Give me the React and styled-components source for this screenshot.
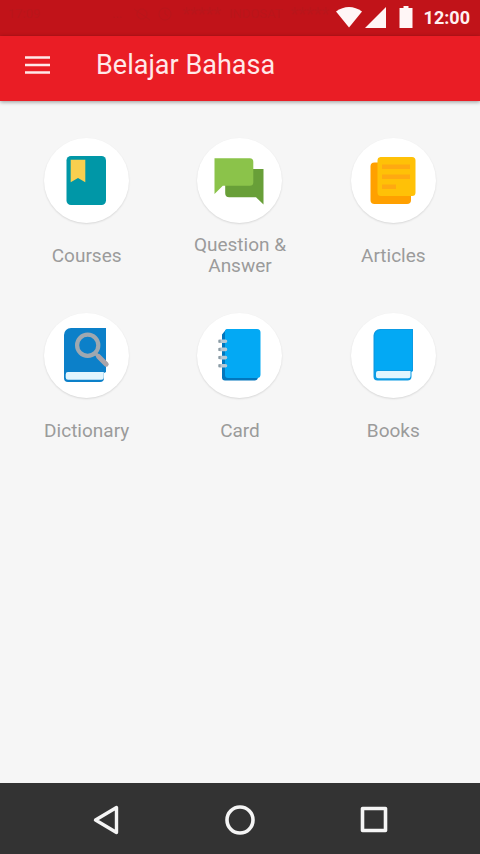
import React from "react";
import styled, { createGlobalStyle } from "styled-components";

const red = "#ea1d25";
const darkRed = "#c11319";
const background = "#f6f6f6";
const labelGrey = "#9b9b9b";
const navGrey = "#333333";

const GlobalStyle = createGlobalStyle`
  * {
    box-sizing: border-box;
  }
  body {
    margin: 0;
    font-family: Roboto, "Noto Sans", sans-serif;
    background: ${background};
  }
`;

const Screen = styled.div`
  min-height: 100vh;
  display: flex;
  flex-direction: column;
`;

const StatusBar = styled.div`
  height: 36px;
  padding: 0 10px 0 8px;
  display: flex;
  align-items: center;
  justify-content: space-between;
  background: ${darkRed};
  color: #fff1f1;
`;

const Carrier = styled.div`
  display: flex;
  align-items: center;
  gap: 8px;
  padding-bottom: 8px;
  font-size: 13px;
  line-height: 16px;
  color: #b9161b;
`;

const CarrierTime = styled.span`
  width: 96px;
`;

const Signal = styled.span`
  font-size: 18px;
`;

const StatusIcons = styled.div`
  display: flex;
  align-items: center;
`;

const Clock = styled.span`
  margin-left: 10px;
  font-size: 18px;
  line-height: 24px;
  font-weight: 700;
`;

const AppBar = styled.header`
  height: 65px;
  padding: 0 24px 8px;
  display: flex;
  align-items: center;
  gap: 46px;
  background: ${red};
  box-shadow: 0 1px 4px rgba(0, 0, 0, 0.4);
`;

const MenuButton = styled.button`
  display: flex;
  padding: 0;
  border: none;
  background: none;
  cursor: pointer;
`;

const Title = styled.h1`
  margin: 0;
  font-size: 27px;
  line-height: 32px;
  font-weight: 400;
  color: #ffe9e9;
`;

const Menu = styled.main`
  flex: 1;
  padding: 37px 10px;
  display: grid;
  grid-template-columns: repeat(3, 1fr);
  align-content: start;
  row-gap: 37px;
`;

const MenuItem = styled.a`
  display: flex;
  flex-direction: column;
  align-items: center;
  gap: 11px;
  text-decoration: none;
`;

const IconCircle = styled.span`
  display: flex;
  width: 85px;
  height: 85px;
  border-radius: 50%;
  background: #ffffff;
  box-shadow: 0 1px 2px rgba(0, 0, 0, 0.12);
`;

const Label = styled.span`
  display: flex;
  align-items: center;
  max-width: 110px;
  height: 42px;
  font-size: 19px;
  line-height: 21px;
  text-align: center;
  color: ${labelGrey};
`;

const NavBar = styled.nav`
  height: 71px;
  padding: 2px 39px 0;
  display: grid;
  grid-template-columns: repeat(3, 1fr);
  align-items: center;
  justify-items: center;
  background: ${navGrey};
`;

const NavButton = styled.button`
  display: flex;
  padding: 0;
  border: none;
  background: none;
  cursor: pointer;
`;

const CoursesIcon = () => (
  <svg width="85" height="85" viewBox="0 0 85 85">
    <rect x="22.5" y="18" width="39.5" height="49" rx="4.5" fill="#0097a7" />
    <path d="M26.7 21.7h14.6v22.6L34 40l-7.3 4.3z" fill="#f9cf4f" />
  </svg>
);

const QuestionIcon = () => (
  <svg width="85" height="85" viewBox="0 0 85 85">
    <path
      d="M31 31h35.5v35.5l-7.5-7.3H32.2a4 4 0 0 1-4-4V31z"
      fill="#689f38"
    />
    <path
      d="M17.5 20.3h35.3a3.5 3.5 0 0 1 3.5 3.5v20.5a3.5 3.5 0 0 1-3.5 3.5h-27L17.5 56z"
      fill="#8bc34a"
    />
  </svg>
);

const ArticlesIcon = () => (
  <svg width="85" height="85" viewBox="0 0 85 85">
    <rect x="19.5" y="24.5" width="40.5" height="41.5" rx="4" fill="#ffa000" />
    <path
      d="M29.5 19H61a3.5 3.5 0 0 1 3.5 3.5v32a3.5 3.5 0 0 1-3.5 3.5h-31a3.5 3.5 0 0 1-3.5-3.5v-32A3.5 3.5 0 0 1 29.5 19z"
      fill="#ffc107"
    />
    <path
      d="M31 26.5h28v4.5H31zM31 36.5h28V41H31zM31 46.5h14V51H31z"
      fill="#ffa911"
    />
  </svg>
);

const DictionaryIcon = () => (
  <svg width="85" height="85" viewBox="0 0 85 85">
    <path
      d="M27 15h35v44l-2 1v5a4 4 0 0 1-4 4H24a4 4 0 0 1-4-4V22a7 7 0 0 1 7-7z"
      fill="#0c80c9"
    />
    <path
      d="M24 59h35.8v5.2a2.5 2.5 0 0 1-2.5 2.5H24a2.3 2.3 0 0 1-2.3-2.3v-3A2.3 2.3 0 0 1 24 59z"
      fill="#e1f5fe"
    />
    <circle
      cx="43.7"
      cy="32.3"
      r="10.6"
      fill="none"
      stroke="#9fa8b0"
      strokeWidth="4.2"
    />
    <path d="M51 40l5 5" stroke="#9fa8b0" strokeWidth="3.4" />
    <path
      d="M54.5 43.5l7.7 7.7"
      stroke="#a9a4aa"
      strokeWidth="5"
      strokeLinecap="round"
    />
  </svg>
);

const CardIcon = () => (
  <svg width="85" height="85" viewBox="0 0 85 85">
    <path
      d="M29 16.5h20l13 45-1 3a3.5 3.5 0 0 1-3.5 3H28a3 3 0 0 1-3-3v-43z"
      fill="#0277bd"
    />
    <path
      d="M30.5 16H60a3.5 3.5 0 0 1 3.5 3.5v42A3.5 3.5 0 0 1 60 65H31a3 3 0 0 1-3-3V18.5a2.5 2.5 0 0 1 2.5-2.5z"
      fill="#03a9f4"
    />
    <path
      d="M23 28.3h5.5M23 36.4h5.5M23 44.6h5.5M23 52.7h5.5"
      stroke="#b5c8d4"
      strokeWidth="3.6"
      strokeLinecap="round"
    />
    <path
      d="M21.5 28.3h2M21.5 36.4h2M21.5 44.6h2M21.5 52.7h2"
      stroke="#8d9ba3"
      strokeWidth="3"
    />
  </svg>
);

const BooksIcon = () => (
  <svg width="85" height="85" viewBox="0 0 85 85">
    <path
      d="M29 16h33v42l-1.5 1v4.5a4 4 0 0 1-4 4H26.5a4 4 0 0 1-4-4v-41A6.5 6.5 0 0 1 29 16z"
      fill="#0c9be4"
    />
    <path
      d="M30 17h31v40H26a3 3 0 0 0-2.2 1V23A6 6 0 0 1 30 17z"
      fill="#03a9f4"
    />
    <path
      d="M27 58h32.5v4.8a2.5 2.5 0 0 1-2.5 2.5H27a2 2 0 0 1-2-2V60a2 2 0 0 1 2-2z"
      fill="#e1f5fe"
    />
  </svg>
);

const items = [
  { label: "Courses", Icon: CoursesIcon },
  { label: "Question & Answer", Icon: QuestionIcon },
  { label: "Articles", Icon: ArticlesIcon },
  { label: "Dictionary", Icon: DictionaryIcon },
  { label: "Card", Icon: CardIcon },
  { label: "Books", Icon: BooksIcon },
];

const App = () => {
  return (
    <Screen>
      <GlobalStyle />
      <StatusBar>
        <Carrier>
          <CarrierTime>17:09</CarrierTime>
          <span>...</span>
          <svg width="44" height="16" fill="none" stroke="currentColor">
            <circle cx="12" cy="8" r="5" />
            <path d="M4 3l16 11" />
            <circle cx="35" cy="8" r="6" />
            <path d="M35 4v4l3 2" />
          </svg>
          <Signal>*****</Signal>
          <span>INDOSAT</span>
          <Signal>*****</Signal>
        </Carrier>
        <StatusIcons>
          <svg width="78" height="24" viewBox="0 0 78 24" fill="#fff6f6">
            <path d="M0 5.5C8-.5 18-.5 26 5.5L13 21.5z" />
            <path d="M50 1v21H29z" />
            <path d="M67.5 0h5v2h4v20h-13V2h4z" />
          </svg>
          <Clock>12:00</Clock>
        </StatusIcons>
      </StatusBar>
      <AppBar>
        <MenuButton aria-label="Menu">
          <svg width="26" height="18" viewBox="0 0 26 18">
            <path
              d="M1 1.5h25M1 9h25M1 16.5h25"
              stroke="#ffe9e9"
              strokeWidth="2.6"
            />
          </svg>
        </MenuButton>
        <Title>Belajar Bahasa</Title>
      </AppBar>
      <Menu>
        {items.map(({ label, Icon }) => (
          <MenuItem key={label} href="#">
            <IconCircle>
              <Icon />
            </IconCircle>
            <Label>{label}</Label>
          </MenuItem>
        ))}
      </Menu>
      <NavBar>
        <NavButton aria-label="Back">
          <svg width="26" height="30" viewBox="0 0 26 30">
            <path
              d="M23.5 2.5v25L2.5 15z"
              fill="none"
              stroke="#f5f5f5"
              strokeWidth="3.4"
              strokeLinejoin="round"
            />
          </svg>
        </NavButton>
        <NavButton aria-label="Home">
          <svg width="30" height="30" viewBox="0 0 30 30">
            <circle
              cx="15"
              cy="15"
              r="13"
              fill="none"
              stroke="#f5f5f5"
              strokeWidth="3.6"
            />
          </svg>
        </NavButton>
        <NavButton aria-label="Recent apps">
          <svg width="28" height="28" viewBox="0 0 28 28">
            <rect
              x="2.5"
              y="2.5"
              width="23"
              height="22"
              fill="none"
              stroke="#f5f5f5"
              strokeWidth="3.6"
              strokeLinejoin="round"
            />
          </svg>
        </NavButton>
      </NavBar>
    </Screen>
  );
};

export default App;
